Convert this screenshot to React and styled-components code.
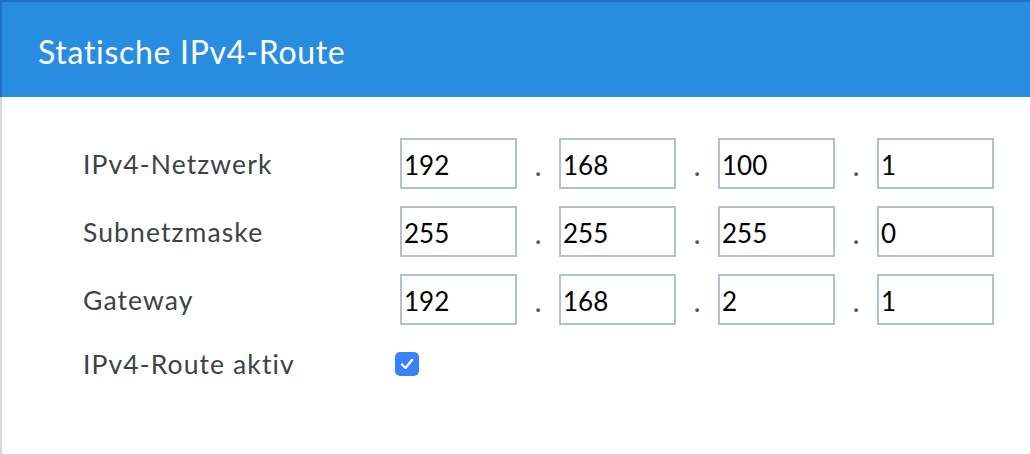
import styled, { createGlobalStyle } from "styled-components";

const GlobalStyle = createGlobalStyle`
  html, body {
    margin: 0;
    padding: 0;
    background: #ffffff;
    font-family: Lato, "Noto Sans", sans-serif;
  }
`;

const Page = styled.div`
  width: 1030px;
  height: 454px;
  overflow: hidden;
  background: #ffffff;
`;

const Header = styled.header`
  height: 95px;
  display: flex;
  align-items: center;
  padding-left: 36px;
  background-color: #288de0;
  border-top: 2px solid #1b72c6;
  border-left: 2px solid #1b72c6;
`;

const Title = styled.h1`
  margin: 0;
  padding-top: 4px;
  color: #ffffff;
  font-size: 32px;
  font-weight: 400;
  letter-spacing: 0.7px;
`;

const Body = styled.main`
  height: 357px;
  box-sizing: border-box;
  padding: 41px 0 0 81px;
  border-left: 2px solid #dcd9d3;
`;

const Row = styled.div`
  display: flex;
  align-items: center;
  height: 51px;
  margin-bottom: 17px;
`;

const Label = styled.label`
  width: 317px;
  color: #3c4249;
  font-size: 26.5px;
  letter-spacing: 1.1px;
`;

const Octet = styled.input`
  width: 117px;
  height: 51px;
  box-sizing: border-box;
  margin: 0;
  padding: 2px 0 0 2px;
  border: 2px solid #b3c1c9;
  border-radius: 0;
  background: #ffffff;
  color: #000000;
  font-family: Lato, "Noto Sans", sans-serif;
  font-size: 26px;
  outline: none;
`;

const Dot = styled.span`
  width: 42px;
  align-self: stretch;
  display: flex;
  align-items: center;
  justify-content: center;
  padding-top: 5px;
  box-sizing: border-box;
  color: #50565c;
  font-size: 24px;
  font-weight: 700;
`;

const CheckRow = styled(Row)`
  margin-top: -4px;
`;

const CheckBox = styled.span`
  width: 24px;
  height: 24px;
  margin-left: -5px;
  display: flex;
  align-items: center;
  justify-content: center;
  border-radius: 5px;
  background: #3a83f6;
`;

const routes = [
  { label: "IPv4-Netzwerk", octets: ["192", "168", "100", "1"] },
  { label: "Subnetzmaske", octets: ["255", "255", "255", "0"] },
  { label: "Gateway", octets: ["192", "168", "2", "1"] },
];

const App = () => (
  <Page>
    <GlobalStyle />
    <Header>
      <Title>Statische IPv4-Route</Title>
    </Header>
    <Body>
      {routes.map((r) => (
        <Row key={r.label}>
          <Label>{r.label}</Label>
          {r.octets.map((o, i) => (
            <>
              {i > 0 && <Dot>.</Dot>}
              <Octet defaultValue={o} key={i} />
            </>
          ))}
        </Row>
      ))}
      <CheckRow>
        <Label>IPv4-Route aktiv</Label>
        <CheckBox>
          <svg width="14" height="12" viewBox="0 0 14 12">
            <path
              d="M2 6.5 L5.5 10 L12 2"
              fill="none"
              stroke="#ffffff"
              strokeWidth="2.4"
              strokeLinecap="round"
              strokeLinejoin="round"
            />
          </svg>
        </CheckBox>
      </CheckRow>
    </Body>
  </Page>
);

export default App;
